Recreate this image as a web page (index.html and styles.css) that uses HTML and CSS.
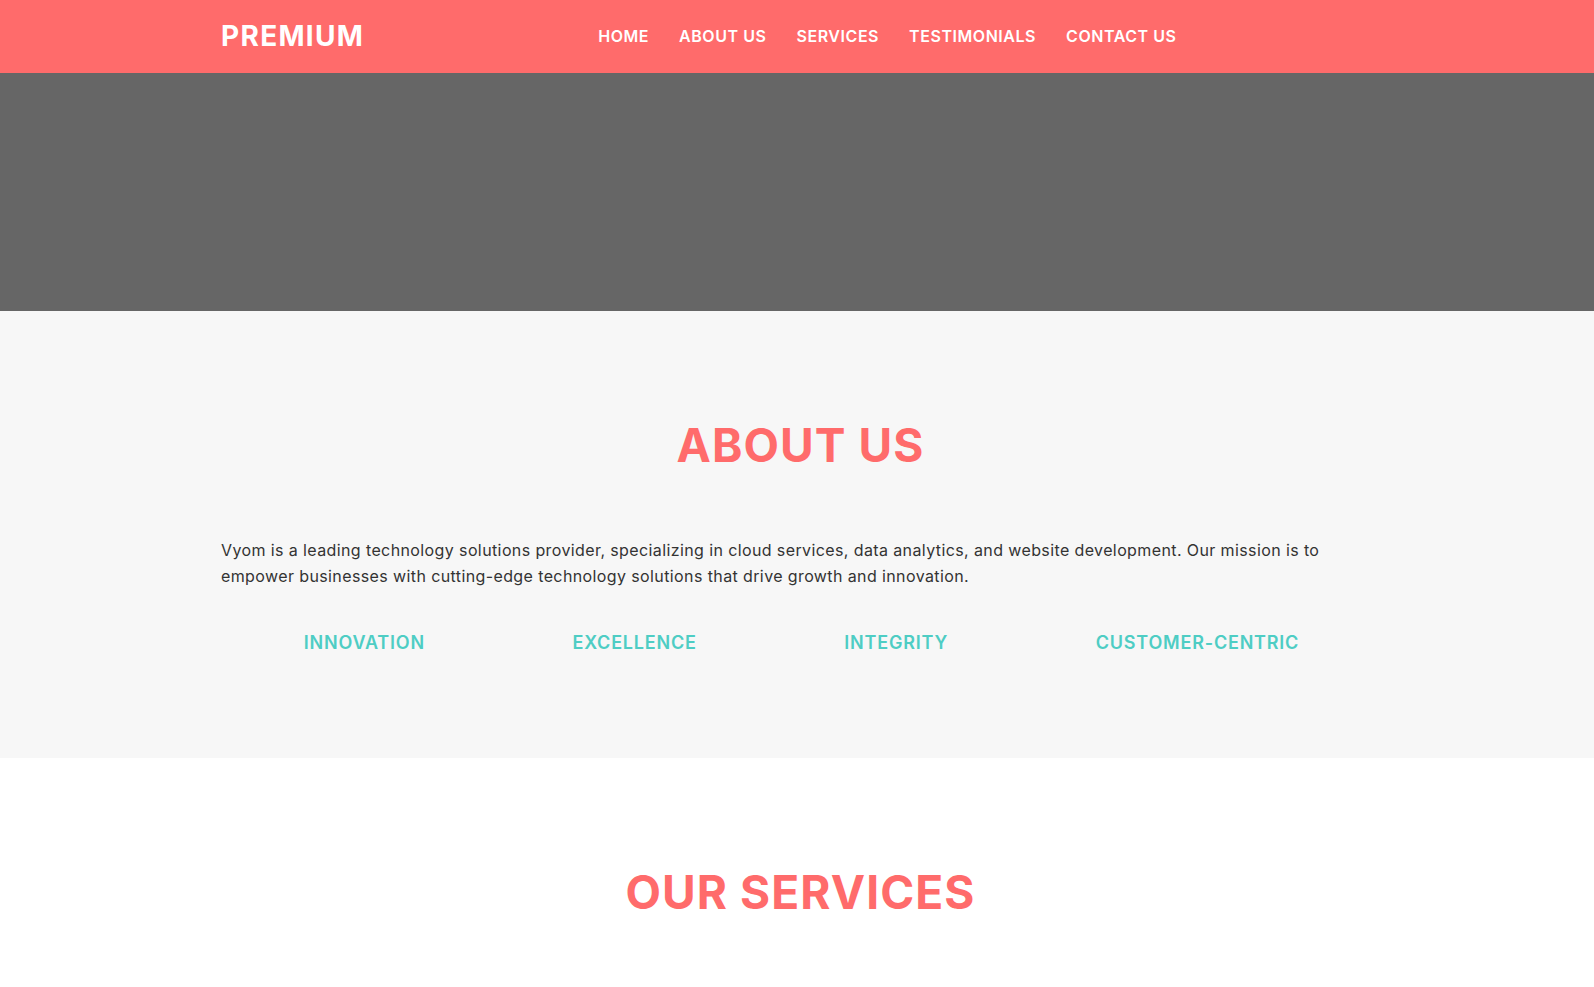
FILE: index.html
```html
<!DOCTYPE html>
<html lang="en">
<head>
<meta charset="utf-8">
<title>Premium</title>
<link rel="stylesheet" href="styles.css">
</head>
<body>
<header class="site-header">
  <div class="container header-inner">
    <div class="logo">PREMIUM</div>
    <nav class="main-nav">
      <a href="#home">HOME</a>
      <a href="#about">ABOUT US</a>
      <a href="#services">SERVICES</a>
      <a href="#testimonials">TESTIMONIALS</a>
      <a href="#contact">CONTACT US</a>
    </nav>
  </div>
</header>
<section class="hero" id="home"></section>
<section class="about" id="about">
  <div class="container">
    <h2 class="section-title">ABOUT US</h2>
    <p class="about-text">Vyom is a leading technology solutions provider, specializing in cloud services, data analytics, and website development. Our mission is to empower businesses with cutting-edge technology solutions that drive growth and innovation.</p>
    <div class="values">
      <div class="value">INNOVATION</div>
      <div class="value">EXCELLENCE</div>
      <div class="value">INTEGRITY</div>
      <div class="value">CUSTOMER-CENTRIC</div>
    </div>
  </div>
</section>
<section class="services" id="services">
  <div class="container">
    <h2 class="section-title">OUR SERVICES</h2>
  </div>
</section>
</body>
</html>
```
FILE: styles.css
```css
html, body {
  margin: 0;
  padding: 0;
}
body {
  font-family: "Inter", "Noto Sans", sans-serif;
  color: #333333;
  background: #ffffff;
}
.container {
  max-width: 1200px;
  margin: 0 auto;
  padding: 0 24px;
  box-sizing: border-box;
}
.site-header {
  background: #ff6b6b;
  height: 73px;
}
.header-inner {
  height: 100%;
  display: flex;
  align-items: center;
  padding-bottom: 2px;
}
.logo {
  font-size: 28px;
  font-weight: 700;
  letter-spacing: 1.3px;
  color: #ffffff;
  line-height: 1;
}
.main-nav {
  display: flex;
  gap: 30px;
  margin-left: 234px;
}
.main-nav a {
  color: #ffffff;
  text-decoration: none;
  font-size: 16px;
  font-weight: 600;
  letter-spacing: 0.55px;
}
.hero {
  height: 238px;
  background: #666666;
}
.about {
  background: #f7f7f7;
  padding: 105px 0 100px;
}
.section-title {
  margin: 0;
  padding-left: 7px;
  text-align: center;
  color: #ff6b6b;
  font-size: 46px;
  line-height: 58px;
  font-weight: 700;
  letter-spacing: 1.1px;
}
.about-text {
  margin: 64px 0 0;
  font-size: 16px;
  line-height: 25.6px;
  letter-spacing: 0.39px;
  color: #333333;
}
.values {
  margin-top: 39px;
  padding-left: 9px;
  display: flex;
  justify-content: space-around;
}
.value {
  color: #4ecdc4;
  font-size: 18px;
  line-height: 30px;
  font-weight: 600;
  letter-spacing: 0.8px;
}
.services {
  background: #ffffff;
  padding: 105px 0 100px;
}
```
